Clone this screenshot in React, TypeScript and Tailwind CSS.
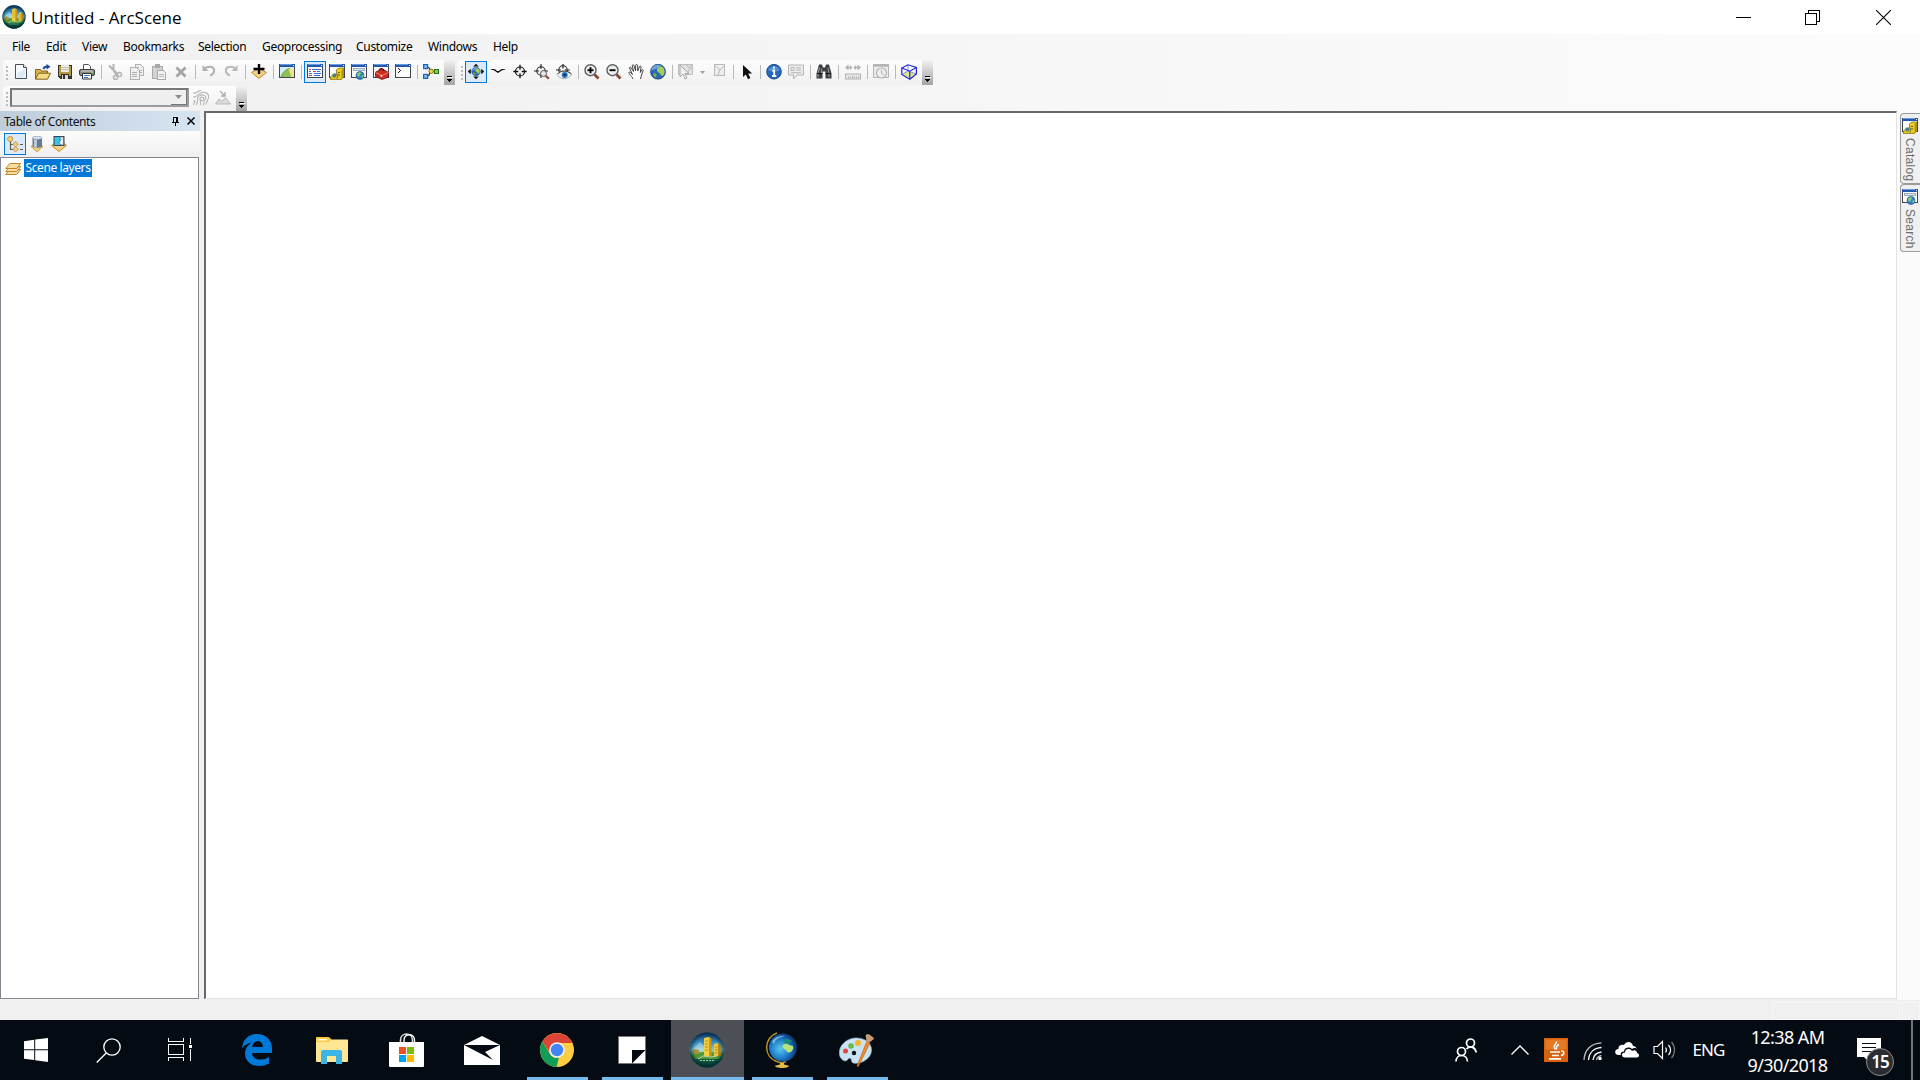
import React from 'react';

type IconProps = { children: React.ReactNode; size?: number; crisp?: boolean };

function Svg({ children, size = 16, crisp = false }: IconProps) {
  return (
    <svg
      width={size}
      height={size}
      viewBox="0 0 16 16"
      fill="none"
      className="shrink-0"
      shapeRendering={crisp ? 'crispEdges' : 'auto'}
    >
      {children}
    </svg>
  );
}

/* ---------- standard toolbar icons ---------- */

const NewIcon = () => (
  <Svg>
    <path d="M2.500 .5h8l3 3v11h-11z" fill="#f7fbff" stroke="#4a4f57" />
    <path d="M4 9l8-4v8.500H4z" fill="#dceafa" />
    <path d="M10.500 .5v3h3" fill="#fff" stroke="#4a4f57" />
  </Svg>
);

const OpenIcon = () => (
  <Svg>
    <path d="M.5 15V5.500h5l1 1.500h6v3" fill="#d9b54a" stroke="#7d6422" />
    <path d="M.5 15.200l3-6h12l-3 6z" fill="#f4dc82" stroke="#7d6422" />
    <path d="M8.500 5c.5-2 1.500-2.500 4-2.500" stroke="#1c4f90" strokeWidth="1.800" />
    <path d="M11.500 0l4 2.700-4 2.800z" fill="#1c4f90" />
  </Svg>
);

const SaveIcon = () => (
  <Svg crisp>
    <path d="M1 1h14v14H3l-2-2z" fill="#35312a" />
    <path d="M2 2h2v10H2zM12 2h2v10h-2z" fill="#b59a45" />
    <rect x="4" y="1" width="8" height="7" fill="#ece9dc" />
    <path d="M4 3h8M4 5h8" stroke="#c9c5b4" />
    <rect x="2" y="8" width="12" height="2" fill="#b59a45" />
    <rect x="5" y="11" width="6" height="4" fill="#d9d9d9" />
    <rect x="6" y="11" width="2" height="4" fill="#35312a" />
  </Svg>
);

const PrintIcon = () => (
  <Svg>
    <path d="M4.500 7V.5h5l2 2V7" fill="#fff" stroke="#555" />
    <rect x=".5" y="5.500" width="15" height="6" rx="1.500" fill="#8b8b86" stroke="#3d3d3d" />
    <path d="M2 7h12" stroke="#d5d5d0" />
    <path d="M3.500 9.500h9v5.500h-9z" fill="#fff" stroke="#333" />
    <path d="M5 11.500h6M5 13.500h4" stroke="#3a7bd0" />
    <rect x="12" y="8" width="2" height="1" fill="#7bdc5a" />
  </Svg>
);

const CutIcon = () => (
  <Svg>
    <path d="M2 1.500l9 9M6.500 0v6l3 5" stroke="#b4b4b4" strokeWidth="2" />
    <circle cx="12.500" cy="10.500" r="2" stroke="#b4b4b4" strokeWidth="1.500" />
    <circle cx="8.500" cy="13.500" r="2" stroke="#b4b4b4" strokeWidth="1.500" />
  </Svg>
);

const CopyIcon = () => (
  <Svg crisp>
    <path d="M6.500 .5h5l3 3v8h-8z" fill="#efefef" stroke="#b0b0b0" />
    <path d="M1.500 3.500h6l3 3v9h-9z" fill="#efefef" stroke="#b0b0b0" />
    <path d="M3 8.500h5M3 10.500h5M3 12.500h5M8 3.500h2M11 6.500h2M11 8.500h2" stroke="#b0b0b0" />
  </Svg>
);

const PasteIcon = () => (
  <Svg crisp>
    <rect x="1.500" y="2.500" width="10" height="12" fill="#d2d2d2" stroke="#a8a8a8" />
    <rect x="4" y="0" width="5" height="4" fill="#a8a8a8" />
    <path d="M6.500 6.500h6l2 2v7h-8z" fill="#f2f2f2" stroke="#a8a8a8" />
    <path d="M8 10.500h5M8 12.500h5" stroke="#b4b4b4" />
  </Svg>
);

const DeleteIcon = () => (
  <Svg>
    <path d="M3.500 3.500l9 9M12.500 3.500l-9 9" stroke="#a3a3a3" strokeWidth="2.800" />
  </Svg>
);

const UndoIcon = () => (
  <Svg>
    <path d="M3 5c5-4 11-2 10 2.500-.4 1.800-2 3.500-4 4" stroke="#b2b2b2" strokeWidth="2" />
    <path d="M1.500 1v6h6z" fill="#b2b2b2" />
  </Svg>
);

const RedoIcon = () => (
  <Svg>
    <path d="M13 5C8 1 2 3 3 7.500c.4 1.800 2 3.500 4 4" stroke="#b9b9b9" strokeWidth="2" />
    <path d="M14.500 1v6h-6z" fill="#b9b9b9" />
  </Svg>
);

const AddDataIcon = () => (
  <Svg>
    <path d="M8 4.500l7.500 4L8 14.500.5 8.500z" fill="#f6cf83" stroke="#c48b2e" />
    <path d="M8 0v10M2.500 5h11" stroke="#000" strokeWidth="2.400" />
  </Svg>
);

const WindowFrame = () => (
  <>
    <rect x=".5" y=".5" width="15" height="13" fill="#fdfdfd" stroke="#40454f" />
    <rect x="0" y="0" width="16" height="3" fill="#2558a8" />
    <rect x="1" y="0" width="12" height="1" fill="#6d9be0" />
    <rect x="14" y="1" width="1" height="1" fill="#fff" />
  </>
);

const MapIcon = () => (
  <Svg>
    <WindowFrame />
    <rect x="1" y="3" width="14" height="10" fill="#d8ebf9" />
    <path d="M2 13C3 9 7 5 11 4.500L15 13z" fill="#8cc152" />
    <path d="M9 3.500c4 0 6 4 6 9.500h-3c-.5-3.500-2-6-3-9.500z" fill="#f1de82" />
    <path d="M2 13C3 9 7 5 11 4.500" stroke="#5c8f3c" strokeWidth=".8" />
  </Svg>
);

const TocWindowIcon = () => (
  <Svg crisp>
    <WindowFrame />
    <path d="M2 5.500h2M6 7.500h3M2 11.500h3" stroke="#d33" />
    <path d="M5 5.500h9M2 7.500h2M10 7.500h3M2 9.500h3M7 9.500h7M7 11.500h6" stroke="#2f6fcf" />
  </Svg>
);

const CatalogIcon = () => (
  <Svg>
    <WindowFrame />
    <path d="M7.500 6l2-2h5v9l-2 2.500h-5z" fill="#e9ce27" stroke="#8c7608" strokeWidth=".8" />
    <path d="M12.500 6.500l2-2.500v9l-2 2.500z" fill="#b3960b" />
    <path d="M9 8.500h2M9 11h2" stroke="#6e5c00" />
    <path d="M1.500 13l3-3h4v4l-2 1.700h-5z" fill="#dcbf1e" stroke="#7b6a10" strokeWidth=".7" />
    <circle cx="5.500" cy="11.500" r="2" fill="#3f8290" />
  </Svg>
);

const SearchWindowIcon = () => (
  <Svg>
    <WindowFrame />
    <rect x="2.500" y="4.500" width="11" height="2" fill="#dcebf7" stroke="#8199ad" strokeWidth=".8" />
    <circle cx="9" cy="11.500" r="4" fill="#2f7fc9" stroke="#1c4e84" strokeWidth=".6" />
    <path d="M6 10c1-2 4-2.500 4-1s-1 1.500-1.500 3S5.500 12 6 10zM10.500 12l2-1.500c.3 2-1 3.500-2 3.500z" fill="#8ccf6a" />
  </Svg>
);

const ToolboxIcon = () => (
  <Svg>
    <WindowFrame />
    <path d="M2.500 8l7-3 6 3.500v4.500L9 15.500l-6.500-3z" fill="#cd2e24" stroke="#7d120c" strokeWidth=".8" />
    <path d="M2.500 8.500L9 11.500l6.500-3" stroke="#f08070" />
    <path d="M6 6.500c1-2.500 4-2.500 5 .5" stroke="#601" strokeWidth="1.300" />
    <circle cx="8.500" cy="12" r="1" fill="#fff" />
  </Svg>
);

const PythonIcon = () => (
  <Svg crisp>
    <WindowFrame />
    <path d="M3 4h1v1h1v1h1v1H5v1H4v1H3V8h1V7h1V6H4V5H3z" fill="#111" />
  </Svg>
);

const ModelBuilderIcon = () => (
  <Svg>
    <path d="M4 3c4 0 2 4 4 4h4M4 12c4 0 2-5 4-5" stroke="#333" strokeWidth="1.200" />
    <rect x=".6" y=".6" width="4" height="4" fill="#7db9f5" stroke="#1467c2" strokeWidth="1.200" />
    <rect x=".6" y="10.400" width="4" height="4" fill="#7db9f5" stroke="#1467c2" strokeWidth="1.200" />
    <circle cx="8.200" cy="7.300" r="2.200" fill="#f7d353" stroke="#8f6a0a" />
    <rect x="11.500" y="5.500" width="4" height="4" fill="#77cf5e" stroke="#23780f" />
  </Svg>
);

/* ---------- 3D navigation icons ---------- */

const Globe = ({ cx, cy, r }: { cx: number; cy: number; r: number }) => (
  <g transform={`translate(${cx} ${cy}) scale(${r / 8})`}>
    <circle r="7.600" fill="#2a69b8" stroke="#173a6a" strokeWidth=".8" />
    <path d="M-7-1A7 7 0 013-6.500C1-3-4-3-7-1z" fill="#8fc0ee" opacity=".7" />
    <path d="M0-4c2-2 5-1.500 6 1 1.500 3 .5 6-1.500 7.500C3 4 3 2 1 1S-2-2 0-4z" fill="#a5cf5c" />
    <path d="M-5 2c2-1 4 0 3.500 2S-3 6-4 5z" fill="#7fb843" />
  </g>
);

const NavigateIcon = () => (
  <Svg>
    <Globe cx={8} cy={7.500} r={4.500} />
    <path d="M8-.2L10.800 2.500H5.200zM8 15.200L5.200 12.500h5.600zM-.2 7.500L2.800 4.700v5.600zM16.200 7.500l-3 2.800V4.700z" fill="#111" />
  </Svg>
);

const FlyIcon = () => (
  <Svg>
    <path d="M0 6.200c2-1.700 5-1.700 7 .8h2c2-2.500 5-2.500 7-.8-3-.3-4.500.1-6 1.600L8 9 6 7.800C4.500 6.300 3 5.900 0 6.200z" fill="#111" />
  </Svg>
);

const CenterIcon = () => (
  <Svg>
    <circle cx="8" cy="7.500" r="4.500" stroke="#111" strokeWidth="1.200" />
    <path d="M8 .8v5M8 9.200v5M1.300 7.500h5M9.700 7.500h5" stroke="#111" strokeWidth="1.300" />
  </Svg>
);

const ZoomTargetIcon = () => (
  <Svg>
    <circle cx="7" cy="7" r="4.200" stroke="#222" strokeWidth="1.100" />
    <path d="M7 0v5M0 7h5M7 9v5M9 7h5" stroke="#222" strokeWidth="1.100" />
    <circle cx="9.500" cy="9.500" r="3" fill="#e2e6e8" stroke="#555" />
    <path d="M11.800 11.800l3 3" stroke="#8b4a3a" strokeWidth="2.200" />
  </Svg>
);

const ObserverIcon = () => (
  <Svg>
    <circle cx="7" cy="6" r="4.200" stroke="#222" strokeWidth="1.100" />
    <path d="M7 0v4.500M0 6h5M9 6h5" stroke="#222" strokeWidth="1.200" />
    <path d="M1.500 11c3-5 10-5 14 0-4 5-11 5-14 0z" fill="#eef4fa" stroke="#888" strokeWidth=".6" />
    <path d="M1.500 10c3-4 10-4 14 0" stroke="#333" />
    <circle cx="8.700" cy="11" r="3" fill="#2375c8" />
    <circle cx="8.700" cy="10.700" r="1.200" fill="#0b2b52" />
  </Svg>
);

const MagnifierIcon = ({ plus = false }: { plus?: boolean }) => (
  <Svg>
    <path d="M10.500 10.500l4 4" stroke="#8b4536" strokeWidth="2.800" />
    <circle cx="6.500" cy="6.200" r="5.500" fill="#eceeef" stroke="#5d6163" strokeWidth="1.400" />
    <path d="M3.500 6.200h6" stroke="#000" strokeWidth="1.900" />
    {plus && <path d="M6.500 3.200v6" stroke="#000" strokeWidth="1.900" />}
  </Svg>
);

const PanIcon = () => (
  <Svg>
    <path
      d="M5 15c-.5-2-2-3-3.500-5C0 8 1.500 7.500 3 9l1.500 1.500L1.500 4c0-1.200 1.300-1 1.800 0l2.200 3.500L4.300 1.700c0-1.300 1.400-1.300 1.800 0l1.400 5.100.2-5.500c.1-1.300 1.600-1.300 1.800 0l.3 5.700 1.600-4.300c.5-1.200 1.800-.8 1.600.4L12.300 8.500l1.200-2.300c.8-1 1.900-.4 1.500.6l-1.500 4.200-1 4"
      fill="#fff"
      stroke="#333"
      strokeWidth=".9"
    />
  </Svg>
);

const FullExtentIcon = () => (
  <Svg>
    <Globe cx={8} cy={7.700} r={7.800} />
  </Svg>
);

const SelectFeaturesIcon = () => (
  <Svg>
    <path d="M.5 .5h14v10h-14z" fill="#e2e2e2" stroke="#bdbdbd" />
    <path d="M8 1l6 4M14 .5l-5 9" stroke="#bdbdbd" />
    <path d="M2 1v12l3-3 2 5 2-1-2-4.500h4z" fill="#f0f0f0" stroke="#a6a6a6" />
  </Svg>
);

const ClearSelectionIcon = () => (
  <Svg>
    <rect x="3.500" y=".5" width="10" height="11" fill="#eee" stroke="#b9b9b9" />
    <path d="M4 2l5 4 4-4M9 6l-2 5" stroke="#b9b9b9" />
  </Svg>
);

const ArrowIcon = () => (
  <Svg>
    <path d="M4 1v12l2.800-2.600 2.200 4.800 2.400-1.100-2.200-4.600h4z" fill="#111" />
  </Svg>
);

const InfoIcon = () => (
  <Svg>
    <circle cx="8" cy="7.700" r="7.300" fill="#2469bd" stroke="#174a8c" />
    <path d="M2 6a6.500 6 0 0112 0c-3 2-9 2-12 0z" fill="#6ea4e4" opacity=".6" />
    <path d="M8 2.500v2.200M6.200 6.500H8.200v5.500M6 12h4.300" stroke="#fff" strokeWidth="1.800" />
  </Svg>
);

const HtmlPopupIcon = () => (
  <Svg>
    <path d="M.5 1h15v10H9l-3.500 4v-4h-5z" fill="#ececec" stroke="#b5b5b5" />
    <path d="M3 3.500h3v3H3zM8 4h5M8 6h5M3 8.700h10" stroke="#b5b5b5" />
  </Svg>
);

const BinocularsIcon = () => (
  <Svg>
    <path d="M3 .5h3l1 3h2l1-3h3l2.500 9v5h-6v-7h-3v7h-6v-5z" fill="#3b3f42" />
    <path d="M3.500 3.500L2 9.500V13M12 3.500l1 6V13M5.500 4.500v5" stroke="#8d9396" strokeWidth="1.200" />
    <path d="M1 9.500h5.500M9.500 9.500H15" stroke="#111" />
  </Svg>
);

const MeasureIcon = () => (
  <Svg>
    <path d="M2 3.500h4M10 3.500h4" stroke="#b2b2b2" strokeWidth="1.600" />
    <path d="M0 3.500l3.500-3v6zM7.500 3.500L5 1v5zM8.500 3.500L11 1v5zM16 3.500l-3.500-3v6z" fill="#b2b2b2" />
    <rect x=".5" y="10" width="15" height="5" fill="#e8e8e8" stroke="#b2b2b2" />
    <path d="M3.500 12.500v2M5.500 12.500v2M7.500 11.500v3M9.500 12.500v2M11.500 12.500v2M13.500 12.500v2" stroke="#b2b2b2" />
  </Svg>
);

const TimeIcon = () => (
  <Svg>
    <path d="M.5 .5h15v13H.5z" fill="#ebebeb" stroke="#b5b5b5" />
    <path d="M0 1.500h16" stroke="#b5b5b5" strokeWidth="2.400" />
    <circle cx="8.500" cy="9" r="5" fill="#eee" stroke="#b5b5b5" strokeWidth="1.200" />
    <path d="M8.500 6v3.500l2.500 1" stroke="#b5b5b5" />
  </Svg>
);

const CubeIcon = () => (
  <Svg>
    <path d="M1 10.500L7 7l8.300 3-7 5z" fill="#d9e98a" />
    <path d="M7 .8V7M1 10.500L7 7l8.300 3" stroke="#7f86d8" strokeWidth=".9" />
    <path
      d="M.8 4L7 .8l8.400 2.700L8.800 7.200zM.8 4v6.500l8 4.700v-8M15.400 3.500V10l-6.600 5.200"
      stroke="#2424dd"
      strokeWidth="1.200"
    />
  </Svg>
);

/* ---------- second toolbar and table of contents ---------- */

const ContourIcon = () => (
  <Svg>
    <path
      d="M0 3c4 1 4-2 8-2.500M0 7c5 1 4-3.500 9-4.500s7 2 6.500 5-2 3-2.500 7M3 15c2-3 2-4 1.500-6S7 4.500 10 5s3.500 2.500 2 4.500-1 3-1.500 6M0 11c3-1 2 1 0 4M7.500 15c.5-2 0-4-.5-5.500s1-2.500 2.500-2.300 1.500 1.500.8 2.500S8.500 11 7 9.800"
      stroke="#b4b4b4"
      strokeWidth="1.100"
    />
  </Svg>
);

const SteepestIcon = () => (
  <Svg>
    <path d="M.5 14l3.500-5 3 2.500 3.500-4 5 6.500z" fill="#dcdcdc" stroke="#b9b9b9" />
    <path d="M5 1l4.500 4.500M10 2v4H6" stroke="#aaa" strokeWidth="1.300" />
  </Svg>
);

const ListByOrderIcon = () => (
  <Svg>
    <path d="M3.500 5v8.500H7M3.500 8.500H7M13 8.500h3M13 13.500h3" stroke="#5a5a5a" strokeWidth="1.200" />
    <circle cx="3.200" cy="3" r="2.600" fill="#f3cf7c" stroke="#c1872b" strokeWidth=".8" />
    <path d="M8.500 5.500l3 2.800-3 2.500-2.800-2.500zM8.500 10.700l3 2.600-3 2.500-2.800-2.500z" fill="#f3cf7c" stroke="#c1872b" strokeWidth=".8" />
  </Svg>
);

const ListBySourceIcon = () => (
  <Svg>
    <path d="M2 10.500L8 9l6 1.500L8 15.800z" fill="#f3cf7c" stroke="#c48b2e" strokeWidth=".8" />
    <path d="M3.500 1.500h9.500v9c-2 1.800-7.500 1.800-9.500 0z" fill="#647b94" />
    <path d="M5 2h3v9.500c-1.200 0-2-.2-3-.6z" fill="#b9c9d8" />
    <ellipse cx="8.200" cy="1.800" rx="4.800" ry="1.600" fill="#dbe4ed" stroke="#7d8fa3" strokeWidth=".6" />
  </Svg>
);

const ListByVisibilityIcon = () => (
  <Svg>
    <path d="M.5 9.500L3 7.500h10l2.500 2L8 15.500z" fill="#f6cf83" stroke="#c48b2e" />
    <rect x="3" y=".5" width="10" height="9" fill="#35c4e8" stroke="#37434d" />
    <path d="M8 1h4.500v8H10L8 6.500l2-3z" fill="#e9f1f3" stroke="#4a5a66" strokeWidth=".7" />
  </Svg>
);

const LayersIcon = () => (
  <Svg>
    {[10, 7, 4].map((y) => (
      <path
        key={y}
        d={`M.7 ${y + 4.500}l4-5h11l-4 5z`}
        fill="#f7dc9e"
        stroke="#b87a1f"
        strokeWidth=".9"
      />
    ))}
  </Svg>
);

/* ArcScene ball, drawn for the title bar and for the taskbar */
const ArcSceneIcon = ({ size }: { size: number }) => (
  <svg width={size} height={size} viewBox="0 0 36 36" className="shrink-0">
    <defs>
      <linearGradient id="ballSky" x1="0" y1="0" x2="0" y2="1">
        <stop offset="0" stopColor="#0d3c6b" />
        <stop offset=".3" stopColor="#3e93c4" />
        <stop offset=".5" stopColor="#8fcdd8" />
        <stop offset=".62" stopColor="#5a9c38" />
        <stop offset=".78" stopColor="#0c5e40" />
        <stop offset="1" stopColor="#053726" />
      </linearGradient>
      <radialGradient id="ballShade" cx=".5" cy=".5" r=".5">
        <stop offset=".7" stopColor="#04253a" stopOpacity="0" />
        <stop offset="1" stopColor="#04253a" stopOpacity=".75" />
      </radialGradient>
    </defs>
    <circle cx="18" cy="18" r="17.500" fill="url(#ballSky)" />
    <path d="M4 18l7-8 5 5 3-3v8H3z" fill="#d9f0f5" opacity=".4" />
    <path d="M4 23c8-4 20-4 28 0l-2 4H6z" fill="#4f9a35" />
    <path d="M3 19l3-2 4 1v4H6z" fill="#a8923c" />
    <path d="M15 6l5-1 2 1.500V24h-7z" fill="#f1cf45" />
    <path d="M20 5l2.500 2v17H20z" fill="#c6951b" />
    <path d="M25 12l4-1 2.500 2v11H25z" fill="#eec83c" />
    <path d="M29 11l2.500 2v11H29z" fill="#b98a17" />
    <path d="M16 9h3M16 12h3M16 15h3M16 18h3M26 15h2.500M26 18h2.500M26 21h2.500" stroke="#a87d12" strokeWidth=".8" />
    <path d="M9 27l5-3 8 1 6-1" stroke="#c5cfb0" strokeWidth="1" fill="none" />
    <path d="M11 28.500h14" stroke="#a9c6a6" strokeWidth="1" strokeDasharray="2 1" />
    <circle cx="18" cy="18" r="17.500" fill="url(#ballShade)" />
  </svg>
);

/* ---------- toolbar pieces ---------- */

const ToolButton = ({ children, active = false }: { children: React.ReactNode; active?: boolean }) => (
  <button
    className={`flex h-[22px] w-[22px] shrink-0 items-center justify-center ${
      active ? 'border border-[#0078d7] bg-[#dbeaf6]' : ''
    }`}
  >
    {children}
  </button>
);

const Sep = ({ narrow = false }: { narrow?: boolean }) => (
  <div className={`flex h-[22px] shrink-0 items-center justify-center ${narrow ? 'w-[5px]' : 'w-1.5'}`}>
    <div className="h-3.5 w-px bg-[#b9b9b9]" />
  </div>
);

const Grip = () => (
  <div className="flex shrink-0 flex-col gap-0.5">
    {[0, 1, 2, 3].map((i) => (
      <div key={i} className="h-0.5 w-0.5 bg-[#bcbcbc]" />
    ))}
  </div>
);

const Overflow = () => (
  <div className="flex h-[25px] w-[11px] shrink-0 flex-col items-center justify-end bg-linear-to-b from-[#f2f2f2] to-[#a3a3a3] pb-[3px]">
    <svg width="6" height="6" viewBox="0 0 6 6" shapeRendering="crispEdges">
      <path d="M0 0h5v1H0zM0 3h5v1H4v1H3v1H2V5H1V4H0z" fill="#000" />
      <path d="M1 1h5v1H1z" fill="#fff" />
    </svg>
  </div>
);

const menus = [
  { label: 'File', width: 'w-[34px]' },
  { label: 'Edit', width: 'w-9' },
  { label: 'View', width: 'w-[41px]' },
  { label: 'Bookmarks', width: 'w-[75px]' },
  { label: 'Selection', width: 'w-16' },
  { label: 'Geoprocessing', width: 'w-[94px]' },
  { label: 'Customize', width: 'w-[72px]' },
  { label: 'Windows', width: 'w-[65px]' },
  { label: 'Help', width: 'w-10' },
];

function TitleBar() {
  return (
    <header className="flex h-[34px] shrink-0 items-center bg-white">
      <div className="ml-0.5 flex">
        <ArcSceneIcon size={24} />
      </div>
      <h1 className="mt-px ml-[5px] grow font-['Open_Sans','Noto_Sans',sans-serif] text-[17px] text-black">
        Untitled - ArcScene
      </h1>
      <div className="flex h-full items-center">
        <button className="flex h-full w-[70px] items-center justify-center">
          <div className="h-px w-[15px] bg-black" />
        </button>
        <button className="flex h-full w-[69px] items-center justify-center">
          <svg width="15" height="15" viewBox="0 0 15 15" fill="none" stroke="#000" shapeRendering="crispEdges">
            <path d="M.5 3.500h11v11H.5zM3.500 3V.5h11v11H12" />
          </svg>
        </button>
        <button className="flex h-full w-[73px] items-center justify-center">
          <svg width="15" height="15" viewBox="0 0 15 15" stroke="#000" strokeWidth="1.100">
            <path d="M0 0l15 15M15 0L0 15" />
          </svg>
        </button>
      </div>
    </header>
  );
}

function StandardToolbar() {
  return (
    <div className="ml-[3px] flex h-[25px] w-[452px] items-center rounded-l bg-linear-to-b from-[#fdfdfd] to-[#f0f0f0] pl-[3px]">
      <Grip />
      <div className="mb-px ml-0.5 flex">
        <ToolButton><NewIcon /></ToolButton>
        <ToolButton><OpenIcon /></ToolButton>
        <ToolButton><SaveIcon /></ToolButton>
        <ToolButton><PrintIcon /></ToolButton>
        <Sep />
        <ToolButton><CutIcon /></ToolButton>
        <ToolButton><CopyIcon /></ToolButton>
        <ToolButton><PasteIcon /></ToolButton>
        <ToolButton><DeleteIcon /></ToolButton>
        <Sep />
        <ToolButton><UndoIcon /></ToolButton>
        <ToolButton><RedoIcon /></ToolButton>
        <Sep />
        <ToolButton><AddDataIcon /></ToolButton>
        <Sep />
        <ToolButton><MapIcon /></ToolButton>
        <Sep />
        <ToolButton active><TocWindowIcon /></ToolButton>
        <ToolButton><CatalogIcon /></ToolButton>
        <ToolButton><SearchWindowIcon /></ToolButton>
        <ToolButton><ToolboxIcon /></ToolButton>
        <ToolButton><PythonIcon /></ToolButton>
        <Sep />
        <ToolButton><ModelBuilderIcon /></ToolButton>
      </div>
      <div className="ml-auto flex">
        <Overflow />
      </div>
    </div>
  );
}

function NavigationToolbar() {
  return (
    <div className="ml-[3px] flex h-[25px] w-[475px] items-center rounded-l bg-linear-to-b from-[#fdfdfd] to-[#f0f0f0] pl-[3px]">
      <Grip />
      <div className="mb-px ml-0.5 flex">
        <ToolButton active><NavigateIcon /></ToolButton>
        <ToolButton><FlyIcon /></ToolButton>
        <ToolButton><CenterIcon /></ToolButton>
        <ToolButton><ZoomTargetIcon /></ToolButton>
        <ToolButton><ObserverIcon /></ToolButton>
        <Sep />
        <ToolButton><MagnifierIcon plus /></ToolButton>
        <ToolButton><MagnifierIcon /></ToolButton>
        <ToolButton><PanIcon /></ToolButton>
        <ToolButton><FullExtentIcon /></ToolButton>
        <Sep />
        <ToolButton><SelectFeaturesIcon /></ToolButton>
        <button className="flex h-[22px] w-[11px] items-center justify-center">
          <svg width="5" height="3" viewBox="0 0 5 3"><path d="M0 0h5L2.500 3z" fill="#9d9d9d" /></svg>
        </button>
        <ToolButton><ClearSelectionIcon /></ToolButton>
        <Sep />
        <ToolButton><ArrowIcon /></ToolButton>
        <Sep narrow />
        <ToolButton><InfoIcon /></ToolButton>
        <ToolButton><HtmlPopupIcon /></ToolButton>
        <Sep />
        <ToolButton><BinocularsIcon /></ToolButton>
        <Sep />
        <div className="ml-px flex">
          <ToolButton><MeasureIcon /></ToolButton>
          <Sep />
          <ToolButton><TimeIcon /></ToolButton>
          <Sep />
          <ToolButton><CubeIcon /></ToolButton>
        </div>
      </div>
      <div className="ml-auto flex">
        <Overflow />
      </div>
    </div>
  );
}

function LayerToolbar() {
  return (
    <div className="mt-px ml-[3px] flex h-[25px] w-[244px] items-center rounded-l bg-linear-to-b from-[#fdfdfd] to-[#f0f0f0] pl-[3px]">
      <Grip />
      <div className="mb-0.5 ml-0.5 flex h-[19px] w-[179px] justify-end border-2 border-[#9c9c9c] border-t-[#777] border-l-[#777] bg-[#efefef]">
        <div className="flex w-4 items-center justify-center border-r border-b border-[#777] bg-[#f0f0f0]">
          <svg width="7" height="4" viewBox="0 0 7 4"><path d="M0 0h7L3.500 4z" fill="#8a8a8a" /></svg>
        </div>
      </div>
      <div className="mb-px ml-px flex">
        <ToolButton><ContourIcon /></ToolButton>
        <ToolButton><SteepestIcon /></ToolButton>
      </div>
      <div className="ml-auto flex">
        <Overflow />
      </div>
    </div>
  );
}

function TableOfContents() {
  return (
    <aside className="mb-px flex w-[200px] shrink-0 flex-col bg-[#f0f0f0]">
      <div className="flex h-5 shrink-0 items-center bg-linear-to-r from-[#bfcddb] to-[#d7e4f2] pl-1 text-[#111]">
        <span className="mt-0.5 grow text-[12px] tracking-[-0.4px]">Table of Contents</span>
        <svg width="7" height="9" viewBox="0 0 7 9" fill="none" stroke="#000" shapeRendering="crispEdges" className="mr-2">
          <path d="M1 .5h5M1.500 1v4M4.500 1v4M5.500 1v4M0 5.500h7M3.500 6v3" />
        </svg>
        <svg width="8" height="8" viewBox="0 0 8 8" stroke="#000" strokeWidth="1.500" className="mr-[5px]">
          <path d="M.5.5l7 7M7.500.5l-7 7" />
        </svg>
      </div>
      <div className="flex h-[26px] shrink-0 items-center bg-linear-to-b from-[#fcfcfc] to-[#efefef] pl-1">
        <ToolButton active><ListByOrderIcon /></ToolButton>
        <ToolButton><ListBySourceIcon /></ToolButton>
        <ToolButton><ListByVisibilityIcon /></ToolButton>
      </div>
      <div className="mr-px grow border border-[#828790] bg-white pt-px pl-1">
        <div className="flex h-[18px] items-center">
          <LayersIcon />
          <span className="ml-[3px] flex h-[18px] w-[68px] items-center justify-center bg-[#0078d7] text-[12px] tracking-[-0.4px] whitespace-nowrap text-white">
            Scene layers
          </span>
        </div>
      </div>
    </aside>
  );
}

const SideTab = ({ label, icon, height }: { label: string; icon: React.ReactNode; height: string }) => (
  <div
    className={`flex ${height} w-5 flex-col items-center rounded-l border border-r-0 border-[#9b9b9b] bg-[#f0f0f0] pt-1 pr-px`}
  >
    {icon}
    <span className="mt-1 font-['Liberation_Sans',sans-serif] text-[12px] leading-4 tracking-[0.3px] text-[#6d6d6d] [writing-mode:vertical-rl]">
      {label}
    </span>
  </div>
);

/* ---------- taskbar ---------- */

const EdgeLogo = () => (
  <svg width="30" height="32" viewBox="0 0 30 32">
    <path
      d="M0 14C1 5 7 0 15 0c10 0 15 7 15 15v4H10c.3 4.500 4 6.500 8.500 6.500 3.500 0 6-.8 8.500-2.500v6.500c-3 1.700-6.500 2.500-10 2.500C8.500 32 3 26.500 3 19.500 3 14.500 6 10.500 10.500 8.500 5.500 9 2 11.500 0 14zm10.200-1h10.600c0-3.500-1.500-5.700-5-5.700-3.300 0-5.200 2.200-5.600 5.700z"
      fill="#0078d7"
    />
  </svg>
);

const ExplorerLogo = () => (
  <svg width="32" height="27" viewBox="0 0 32 27">
    <path d="M0 1.500C0 .7.7 0 1.500 0h11l3 2.500H31c.6 0 1 .4 1 1V24c0 .6-.4 1-1 1H1c-.6 0-1-.4-1-1z" fill="#ffe694" />
    <path d="M0 1.500C0 .7.700 0 1.500 0h11l2.500 2.200-2 2.800H0z" fill="#ffc937" />
    <path d="M2 2h9v1.500H2z" fill="#fff" />
    <path d="M5 15c0-1.200.8-2 2-2h17c1.200 0 2 .8 2 2v12h-6v-8h-9v8H5z" fill="#3cb4e5" />
  </svg>
);

const StoreLogo = () => (
  <svg width="35" height="34" viewBox="0 0 35 34" fill="none">
    <path d="M11.500 10V7c0-8 12-8 12 0v3" stroke="#ddd" strokeWidth="1.600" />
    <path d="M15 10V7c0-7 10.500-7 10.500 0v3" stroke="#fff" strokeWidth="1.400" />
    <path d="M0 9h35v23.500c0 1-.5 1.500-1.500 1.500h-32C.5 34 0 33.500 0 32.500z" fill="#fff" />
    <path d="M10 14h7v7h-7z" fill="#f25022" />
    <path d="M18 14h7v7h-7z" fill="#7fba00" />
    <path d="M10 22h7v7h-7z" fill="#00a4ef" />
    <path d="M18 22h7v7h-7z" fill="#ffb900" />
  </svg>
);

const MailLogo = () => (
  <svg width="36" height="29" viewBox="0 0 36 29">
    <path d="M0 9L18 0l18 9v20H0z" fill="#fff" />
    <path d="M0 9h36L21 16l8 8-15.500-8z" fill="#050b12" />
  </svg>
);

const ChromeLogo = () => (
  <svg width="34" height="34" viewBox="0 0 34 34">
    <circle cx="17" cy="17" r="17" fill="#ffcd40" />
    <path d="M2.300 8.500A17 17 0 0131.700 8.700L33 10H17a7.800 7.800 0 00-7 10z" fill="#db4437" />
    <path d="M2.300 8.500l8 13A7.800 7.800 0 0019 24.500L16.500 34A17 17 0 012.300 8.500z" fill="#0f9d58" />
    <circle cx="17" cy="17" r="7.800" fill="#f1f1f1" />
    <circle cx="17" cy="17" r="6.200" fill="#4285f4" />
  </svg>
);

const StickyLogo = () => (
  <svg width="28" height="28" viewBox="0 0 28 28">
    <path d="M.5.5h27v27H.5z" fill="#fff" stroke="#777" />
    <path d="M14 14h13.500L14 27.500z" fill="#050b12" />
  </svg>
);

const ArcGlobeLogo = () => (
  <svg width="34" height="36" viewBox="0 0 34 36" fill="none">
    <defs>
      <radialGradient id="sea" cx=".4" cy=".55" r=".6">
        <stop offset="0" stopColor="#5cc8f0" />
        <stop offset=".6" stopColor="#1a76c4" />
        <stop offset="1" stopColor="#0b2f6c" />
      </radialGradient>
    </defs>
    <path d="M12 1C-1 5-3 25 13 30c3 1 6 .5 8-.5" stroke="#b8922c" strokeWidth="1.500" />
    <path d="M15 31h4v1.500l5 1.200c0 3-14 3-14 0l5-1.200z" fill="#e4bd49" />
    <circle cx="18" cy="15.500" r="14" fill="url(#sea)" />
    <path d="M18 13c2-2 5-1 6 0l4 1c1 4-2 7-5 6.500-2-1-1-2-3-3-3-1-3-3-2-4.500z" fill="#b6e47a" />
    <path d="M19 8c2-2 6-1 8 1l-3 3-5-1z" fill="#1c8a78" />
    <path d="M7 10c2-5 9-7 13-6-5 1-10 3-11 8z" fill="#b7e4f8" opacity=".6" />
  </svg>
);

const PaintLogo = () => (
  <svg width="36" height="35" viewBox="0 0 36 35">
    <path
      d="M3 12C9 4 20 3 28 8c6 5 6 13 0 18-5 4-10 5-14 4-2-1-1-4-3-5-2 0-2 3-5 3-7-2-7-11-3-16z"
      fill="#c9e2f2"
      stroke="#8db8d4"
      strokeWidth=".6"
    />
    <circle cx="15" cy="20" r="2.200" fill="#07111a" />
    <circle cx="19" cy="10" r="3" fill="#f4b42f" />
    <circle cx="12" cy="13" r="2.800" fill="#67b94b" />
    <circle cx="6.500" cy="18" r="2.500" fill="#e4463c" />
    <path d="M28 8l3 2-12 24-1-1z" fill="#f08a24" stroke="#b3560e" strokeWidth=".6" />
    <path d="M27 2c2-3 6 2 8 3-1 3-4 3-5 5l-3-2c1-2-1-4 0-6z" fill="#c79a74" />
  </svg>
);

type TaskApp = { name: string; logo: React.ReactNode; state: 'idle' | 'running' | 'focused' };

const taskApps: TaskApp[] = [
  { name: 'edge', logo: <EdgeLogo />, state: 'idle' },
  { name: 'explorer', logo: <ExplorerLogo />, state: 'idle' },
  { name: 'store', logo: <StoreLogo />, state: 'idle' },
  { name: 'mail', logo: <MailLogo />, state: 'idle' },
  { name: 'chrome', logo: <ChromeLogo />, state: 'running' },
  { name: 'sticky', logo: <StickyLogo />, state: 'running' },
  { name: 'arcscene', logo: <ArcSceneIcon size={36} />, state: 'focused' },
  { name: 'arcglobe', logo: <ArcGlobeLogo />, state: 'running' },
  { name: 'paint', logo: <PaintLogo />, state: 'running' },
];

function SystemTray() {
  return (
    <div className="ml-auto flex h-full items-center text-white">
      <div className="flex w-[72px] justify-center">
        <svg width="22" height="24" viewBox="0 0 22 24" fill="none" stroke="#fff" strokeWidth="1.700">
          <circle cx="15.500" cy="5" r="4" />
          <circle cx="6.500" cy="13.500" r="4" />
          <path d="M1 23.500c0-8 11-8 11.500 0M11.500 11c4-4 9-1.500 9.700 3.500" />
        </svg>
      </div>
      <div className="flex w-9 justify-center">
        <svg width="18" height="10" viewBox="0 0 18 10" fill="none" stroke="#fff" strokeWidth="1.300">
          <path d="M.5 9.500L9 1l8.500 8.500" />
        </svg>
      </div>
      <div className="flex w-9 justify-center">
        <svg width="24" height="24" viewBox="0 0 24 24" fill="none">
          <path d="M0 0h24v24H0z" fill="#d8620c" />
          <path d="M1.500 1.500h21v10h-21z" fill="#e67a24" />
          <path d="M12.500 3.500c1 2-5 4-1 8M15 6.500c-4 2-2 3-2.500 5" stroke="#fff" strokeWidth="1.400" />
          <path d="M6 14h10M8 17.500h7M5 20.800h12" stroke="#fff" strokeWidth="1.700" />
          <path d="M17 13c4-.5 3.500 4 0 4.500" stroke="#fff" strokeWidth="1.400" />
        </svg>
      </div>
      <div className="flex w-[37px] justify-center pt-0.5">
        <svg width="19" height="18" viewBox="0 0 19 18" fill="none" stroke="#fff" strokeWidth="1.300">
          <path d="M1 18C1.500 8 8 1.200 18.500.8" opacity=".75" />
          <path d="M5.500 18C6 10.500 11 6 18.500 5.500" />
          <path d="M10 18c.5-4.500 4-7.500 8.500-8" />
          <path d="M13.500 18c.3-2.500 2-4 5-4.500" opacity=".7" />
          <circle cx="17" cy="16.500" r="1.700" fill="#fff" stroke="none" />
        </svg>
      </div>
      <div className="flex w-[35px] pl-1">
        <svg width="24" height="16" viewBox="0 0 24 16" fill="#fff">
          <path d="M4 13C-1 13-1 7 3.500 7 3 3 7 2 9 3c2-4 8-4 9 1 2 0 3 1 3.500 2.500-2-.8-3.500-.3-4.500.5-3-3-8-1-8 2.500C6 9.500 5 11.500 6 13z" />
          <path d="M10 15.500c-4 0-4-5 0-5C10 6.500 15 6 17 9c3-2 5 0 5 2 3 .5 2.500 4.500 0 4.500z" />
        </svg>
      </div>
      <div className="flex w-[36px] justify-center">
        <svg width="23" height="20" viewBox="0 0 23 20" fill="none" stroke="#fff" strokeWidth="1.200">
          <path d="M1 6.500h3.500L9.500 1.500v17l-5-5H1z" />
          <path d="M12.500 7.500c1.200 1.500 1.200 3.500 0 5M15.500 5c2.500 3 2.500 7 0 10" />
          <path d="M18.500 2c4 4.500 4 11.500 0 16" opacity=".45" />
        </svg>
      </div>
      <span className="w-[53px] text-center text-[17px] tracking-[-0.9px]">ENG</span>
      <div className="flex w-[105px] flex-col items-center pt-px text-[18px] leading-[28px] tracking-[-0.6px] whitespace-nowrap">
        <span>12:38 AM</span>
        <span>9/30/2018</span>
      </div>
      <div className="relative flex h-full w-[71px] items-start pt-[18px] pl-[17px]">
        <svg width="24" height="25" viewBox="0 0 24 25">
          <path d="M0 0h24v19H13v6l-6-6H0z" fill="#fff" />
          <path d="M5 5.500h14M5 9.500h14M5 13.500h10" stroke="#050b12" strokeWidth="1.200" />
        </svg>
        <span className="absolute top-7 left-[26px] flex h-7 w-7 items-center justify-center rounded-full border border-[#8b8d90] bg-[#2a2d31] text-[17px] font-semibold tracking-[-1px]">
          15
        </span>
      </div>
      <div className="h-full w-[9px] border-l-2 border-[#6f7377]" />
    </div>
  );
}

function Taskbar() {
  return (
    <footer className="flex h-[60px] shrink-0 items-center bg-[#050b12]">
      <div className="flex w-[72px] justify-center">
        <svg width="24" height="24" viewBox="0 0 24 24" fill="#fff">
          <path d="M0 3.200L10.200 1.800v9.500H0zM11.200 1.600L24 0v11.300H11.200zM0 12.300h10.200v9.700L0 20.700zM11.200 12.300H24V24l-12.800-1.800z" />
        </svg>
      </div>
      <div className="flex w-[72px] justify-center">
        <svg width="25" height="25" viewBox="0 0 25 25" fill="none" stroke="#fff" strokeWidth="1.300">
          <circle cx="16" cy="9" r="8.200" />
          <path d="M10.200 15L.7 24.500" />
        </svg>
      </div>
      <div className="flex w-[72px] justify-center">
        <svg width="25" height="24" viewBox="0 0 25 24" fill="none" stroke="#fff" shapeRendering="crispEdges">
          <path d="M.5 0v3.500h15V0M.5 6.500h15v10H.5zM.5 23v-3.500h15V23M22.500 0v6M22.500 11v12" />
          <path d="M21 7h3v3h-3z" fill="#fff" stroke="none" />
        </svg>
      </div>
      <nav className="ml-1 flex h-full">
        {taskApps.map((app) => (
          <div key={app.name} className="flex h-full w-[75px] justify-center">
            <div
              className={`flex h-full flex-col items-center ${
                app.state === 'focused' ? 'w-[73px] bg-[#4c5056]' : 'w-[61px]'
              }`}
            >
              <div className="flex h-[57px] items-center pt-[3px] pr-0.5">{app.logo}</div>
              {app.state !== 'idle' && <div className="h-[3px] w-full bg-[#76b9ed]" />}
            </div>
          </div>
        ))}
      </nav>
      <SystemTray />
    </footer>
  );
}

export default function App() {
  return (
    <div className="flex h-[1080px] w-[1920px] flex-col overflow-hidden bg-[#f0f0f0] font-['Noto_Sans','Open_Sans',sans-serif]">
      <TitleBar />
      <div className="flex h-[77px] shrink-0 flex-col bg-linear-to-r from-[#f0f0f0] to-[#fcfcfc]">
        <nav className="flex h-[26px] items-center pl-3 text-[12px] text-black">
          {menus.map((menu) => (
            <span key={menu.label} className={`${menu.width} shrink-0 tracking-[-0.3px] whitespace-nowrap`}>
              {menu.label}
            </span>
          ))}
        </nav>
        <div className="flex">
          <StandardToolbar />
          <NavigationToolbar />
        </div>
        <LayerToolbar />
      </div>
      <div className="flex min-h-0 grow">
        <TableOfContents />
        <main className="mb-px ml-1 grow border-t-2 border-r border-b border-l-2 border-t-[#696969] border-r-[#e3e3e3] border-b-[#e3e3e3] border-l-[#696969] bg-white" />
        <div className="flex w-[23px] shrink-0 flex-col items-end bg-[#fbfbfb] pt-0.5">
          <SideTab label="Catalog" icon={<CatalogIcon />} height="h-[71px]" />
          <SideTab label="Search" icon={<SearchWindowIcon />} height="h-[68px]" />
        </div>
      </div>
      <div className="flex h-5 shrink-0 justify-end gap-0.5 bg-[#f0f0f0] pt-0.5">
        <div className="w-32 border border-[#f7f7f7]" />
        <div className="w-[18px] border border-[#f7f7f7]" />
      </div>
      <Taskbar />
    </div>
  );
}
